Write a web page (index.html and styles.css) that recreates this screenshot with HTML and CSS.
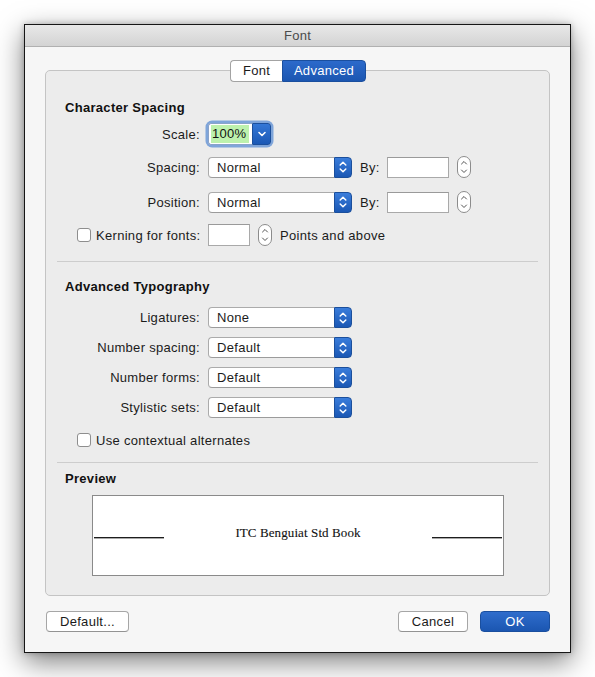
FILE: index.html
```html
<!DOCTYPE html>
<html>
<head>
<meta charset="utf-8">
<link rel="stylesheet" href="styles.css">
</head>
<body>
<div class="window">
  <div class="titlebar">Font</div>
  <div class="content">
    <div class="group">
      <div class="tabs">
        <span class="tab tab-font">Font</span>
        <span class="tab tab-adv">Advanced</span>
      </div>

      <div class="sec">
        <h2>Character Spacing</h2>
        <div class="row r-scale">
          <span class="lbl">Scale:</span>
          <div class="combo">
            <div class="combo-val"><span class="sel">100%</span></div>
            <div class="combo-arrow">
              <svg width="10" height="8" viewBox="0 0 10 8"><path d="M2 2.5 L5 5.5 L8 2.5" fill="none" stroke="#fff" stroke-width="1.6" stroke-linecap="round" stroke-linejoin="round"/></svg>
            </div>
          </div>
        </div>
        <div class="row r-spacing">
          <span class="lbl">Spacing:</span>
          <div class="popup">
            <div class="popup-val">Normal</div>
            <div class="popup-arrow"><svg width="10" height="14" viewBox="0 0 10 14"><path d="M2.2 5 L5 2.3 L7.8 5 M2.2 9 L5 11.7 L7.8 9" fill="none" stroke="#fff" stroke-width="1.5" stroke-linecap="round" stroke-linejoin="round"/></svg></div>
          </div>
          <span class="by">By:</span>
          <div class="field field-by"></div>
          <svg class="stepper" width="14" height="22" viewBox="0 0 14 22"><rect x="0.5" y="0.5" width="13" height="21" rx="6.5" fill="#fff" stroke="#8c8c8c"/><path d="M4.5 8 L7 5.5 L9.5 8 M4.5 14 L7 16.5 L9.5 14" fill="none" stroke="#555" stroke-width="1" stroke-linecap="round" stroke-linejoin="round"/></svg>
        </div>
        <div class="row r-position">
          <span class="lbl">Position:</span>
          <div class="popup">
            <div class="popup-val">Normal</div>
            <div class="popup-arrow"><svg width="10" height="14" viewBox="0 0 10 14"><path d="M2.2 5 L5 2.3 L7.8 5 M2.2 9 L5 11.7 L7.8 9" fill="none" stroke="#fff" stroke-width="1.5" stroke-linecap="round" stroke-linejoin="round"/></svg></div>
          </div>
          <span class="by">By:</span>
          <div class="field field-by"></div>
          <svg class="stepper" width="14" height="22" viewBox="0 0 14 22"><rect x="0.5" y="0.5" width="13" height="21" rx="6.5" fill="#fff" stroke="#8c8c8c"/><path d="M4.5 8 L7 5.5 L9.5 8 M4.5 14 L7 16.5 L9.5 14" fill="none" stroke="#555" stroke-width="1" stroke-linecap="round" stroke-linejoin="round"/></svg>
        </div>
        <div class="row r-kern">
          <span class="lbl lbl-check"><span class="check"></span>Kerning for fonts:</span>
          <div class="field field-kern"></div>
          <svg class="stepper" width="14" height="22" viewBox="0 0 14 22"><rect x="0.5" y="0.5" width="13" height="21" rx="6.5" fill="#fff" stroke="#8c8c8c"/><path d="M4.5 8 L7 5.5 L9.5 8 M4.5 14 L7 16.5 L9.5 14" fill="none" stroke="#555" stroke-width="1" stroke-linecap="round" stroke-linejoin="round"/></svg>
          <span class="after">Points and above</span>
        </div>
      </div>

      <div class="sep sep1"></div>

      <div class="sec">
        <h2 class="h-adv">Advanced Typography</h2>
        <div class="row prow r-lig">
          <span class="lbl">Ligatures:</span>
          <div class="popup">
            <div class="popup-val">None</div>
            <div class="popup-arrow"><svg width="10" height="14" viewBox="0 0 10 14"><path d="M2.2 5 L5 2.3 L7.8 5 M2.2 9 L5 11.7 L7.8 9" fill="none" stroke="#fff" stroke-width="1.5" stroke-linecap="round" stroke-linejoin="round"/></svg></div>
          </div>
        </div>
        <div class="row prow">
          <span class="lbl">Number spacing:</span>
          <div class="popup">
            <div class="popup-val">Default</div>
            <div class="popup-arrow"><svg width="10" height="14" viewBox="0 0 10 14"><path d="M2.2 5 L5 2.3 L7.8 5 M2.2 9 L5 11.7 L7.8 9" fill="none" stroke="#fff" stroke-width="1.5" stroke-linecap="round" stroke-linejoin="round"/></svg></div>
          </div>
        </div>
        <div class="row prow">
          <span class="lbl">Number forms:</span>
          <div class="popup">
            <div class="popup-val">Default</div>
            <div class="popup-arrow"><svg width="10" height="14" viewBox="0 0 10 14"><path d="M2.2 5 L5 2.3 L7.8 5 M2.2 9 L5 11.7 L7.8 9" fill="none" stroke="#fff" stroke-width="1.5" stroke-linecap="round" stroke-linejoin="round"/></svg></div>
          </div>
        </div>
        <div class="row prow">
          <span class="lbl">Stylistic sets:</span>
          <div class="popup">
            <div class="popup-val">Default</div>
            <div class="popup-arrow"><svg width="10" height="14" viewBox="0 0 10 14"><path d="M2.2 5 L5 2.3 L7.8 5 M2.2 9 L5 11.7 L7.8 9" fill="none" stroke="#fff" stroke-width="1.5" stroke-linecap="round" stroke-linejoin="round"/></svg></div>
          </div>
        </div>
        <div class="crow">
          <span class="check"></span><span>Use contextual alternates</span>
        </div>
      </div>

      <div class="sep sep2"></div>

      <div class="sec">
        <h2 class="h-prev">Preview</h2>
        <div class="preview">
          <span class="pline"></span>
          <span class="ptext">ITC Benguiat Std Book</span>
          <span class="pline"></span>
        </div>
      </div>
    </div>

    <div class="buttons">
      <button class="btn btn-default">Default...</button>
      <span class="spacer"></span>
      <button class="btn btn-cancel">Cancel</button>
      <button class="btn btn-ok">OK</button>
    </div>
  </div>
</div>
</body>
</html>
```

FILE: styles.css
```css
* { box-sizing: border-box; }
html, body { margin: 0; padding: 0; background: #fff; }
body {
  font-family: "Liberation Sans", Arial, sans-serif;
  font-size: 13px;
  letter-spacing: 0.3px;
  color: #1b1b1b;
  height: 677px;
}

.window {
  margin: 24px 0 0 24px;
  width: 547px;
  height: 629px;
  border: 1px solid #161616;
  background: #f6f6f6;
  box-shadow: 0 9px 26px rgba(0,0,0,0.5), 0 0 6px rgba(0,0,0,0.25);
  display: flex;
  flex-direction: column;
}

.titlebar {
  height: 22px;
  line-height: 22px;
  text-align: center;
  color: #4b4b4b;
  background: linear-gradient(#e8e8e8, #d3d3d3);
  border-bottom: 1px solid #b0b0b0;
  flex: none;
}

.content {
  flex: 1;
  padding: 23px 20px 20px 20px;
  display: flex;
  flex-direction: column;
}

.group {
  border: 1px solid #c4c4c4;
  border-radius: 5px;
  background: #ececec;
  padding: 0 0 19px 0;
}

.tabs {
  display: flex;
  justify-content: center;
  margin-top: -11px;
  height: 22px;
  padding-left: 1px;
}
.tab {
  height: 22px;
  line-height: 20px;
  text-align: center;
  border: 1px solid;
  display: block;
}
.tab-font {
  width: 52px;
  background: #fff;
  border-color: #a3a3a3;
  border-right: none;
  border-radius: 4px 0 0 4px;
  color: #1b1b1b;
}
.tab-adv {
  width: 84px;
  background: linear-gradient(#2c6acb, #1b56b1);
  border-color: #1a4f9f;
  border-radius: 0 4px 4px 0;
  color: #fff;
}

.sec { padding: 0 19px; }

h2 {
  margin: 18px 0 0;
  font-size: 13px;
  font-weight: bold;
  line-height: 16px;
  height: 16px;
  color: #111;
}
.h-adv { margin-top: 17px; }
.h-prev { margin-top: 8px; }

.row {
  display: flex;
  align-items: center;
  height: 22px;
}
.r-scale { margin-top: 7px; }
.r-spacing { margin-top: 11px; }
.r-position { margin-top: 13px; }
.r-kern { margin-top: 11px; }

.prow { height: 21px; margin-top: 9px; }
.r-lig { margin-top: 12px; }

.lbl {
  width: 135px;
  flex: none;
  text-align: right;
  margin-right: 8px;
  white-space: nowrap;
}
.lbl-check {
  display: flex;
  align-items: center;
  justify-content: flex-start;
  padding-left: 12px;
}
.lbl-check .check { margin-right: 5px; }

.check {
  display: inline-block;
  width: 14px;
  height: 14px;
  background: #fff;
  border: 1px solid #8e8e8e;
  border-radius: 3px;
  flex: none;
}

/* combo (scale) */
.combo {
  display: flex;
  width: 63px;
  height: 22px;
  border-radius: 4px;
  box-shadow: 0 0 0 2.5px #7fa5da;
}
.combo-val {
  flex: 1;
  background: #fff;
  border: 1px solid #8aa3c8;
  border-right: none;
  border-radius: 3px 0 0 3px;
  padding: 1px 0 0 2px;
}
.sel {
  display: inline-block;
  background: #bdf1ad;
  height: 18px;
  line-height: 18px;
  padding: 0 3px 0 1px;
  color: #111;
}
.combo-arrow {
  width: 19px;
  background: linear-gradient(#3477d6, #1b58b5);
  border: 1px solid #1b4f9c;
  border-radius: 0 3px 3px 0;
  display: flex;
  align-items: center;
  justify-content: center;
}

/* popup */
.popup {
  display: flex;
  width: 144px;
  height: 21px;
  flex: none;
}
.popup-val {
  flex: 1;
  background: #fff;
  border: 1px solid #ababab;
  border-bottom-color: #9b9b9b;
  border-right: none;
  border-radius: 4px 0 0 4px;
  padding-left: 8px;
  line-height: 19px;
  color: #1b1b1b;
}
.popup-arrow {
  width: 18px;
  background: linear-gradient(#3a7ddb, #1a57b4);
  border: 1px solid #1b4f9c;
  border-radius: 0 4px 4px 0;
  display: flex;
  align-items: center;
  justify-content: center;
}

.by { margin-left: 8px; width: 27px; }
.field {
  height: 21px;
  background: #fff;
  border: 1px solid #a9a9a9;
  border-top-color: #9a9a9a;
  flex: none;
}
.field-by { width: 62px; }
.field-kern { width: 42px; height: 22px; }
.stepper { margin-left: 8px; flex: none; display: block; }
.after { margin-left: 8px; }

.sep {
  height: 1px;
  background: #cdcdcd;
  margin: 15px 11px 0;
}
.sep2 { margin-top: 14px; }

.crow {
  display: flex;
  align-items: center;
  height: 16px;
  margin-top: 14px;
  padding-left: 12px;
}
.crow .check { margin-right: 5px; }

.preview {
  margin: 8px 0 0 27px;
  width: 412px;
  height: 81px;
  background: #fff;
  border: 1px solid #8a8a8a;
  display: flex;
  align-items: center;
  justify-content: space-between;
  padding: 0 1px;
}
.pline {
  width: 70px;
  height: 1px;
  background: #1e1e1e;
  margin-top: 3px;
  box-shadow: 0 0.5px 0 #555;
}
.ptext {
  font-family: "Liberation Serif", "Times New Roman", serif;
  font-size: 13px;
  color: #111;
  letter-spacing: 0.1px;
  margin-bottom: 6px;
  -webkit-text-stroke: 0.1px #111;
}

.buttons {
  display: flex;
  margin-top: 15px;
  height: 21px;
}
.btn {
  font-family: "Liberation Sans", Arial, sans-serif;
  font-size: 13px;
  letter-spacing: 0.3px;
  height: 21px;
  padding: 0;
  border-radius: 4px;
  background: #fff;
  border: 1px solid #a6a6a6;
  border-bottom-color: #939393;
  color: #1b1b1b;
  line-height: 19px;
}
.btn-default { width: 83px; margin-left: 1px; }
.spacer { flex: 1; }
.btn-cancel { width: 70px; margin-right: 12px; }
.btn-ok {
  width: 70px;
  background: linear-gradient(#2f6dcc, #1b56b1);
  border-color: #1a4f9f;
  color: #fff;
}
```
